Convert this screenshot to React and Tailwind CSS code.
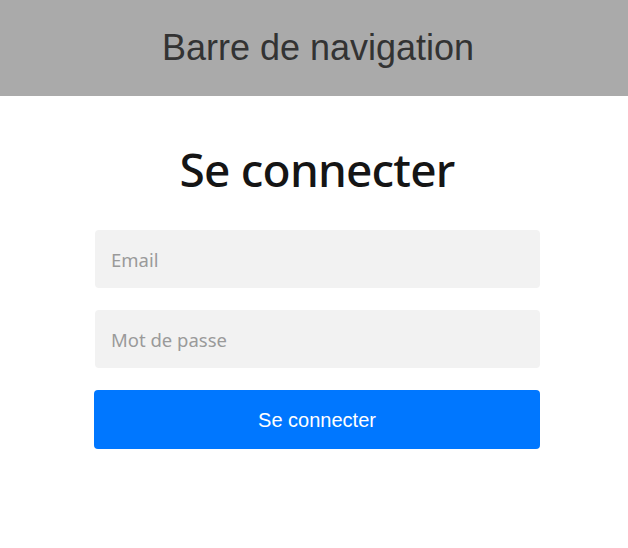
import React from "react";

const App = () => {
  return (
    <div className="min-h-[548px] bg-white">
      <nav className="h-[96px] bg-[#aaaaaa] flex items-center justify-center pl-[8px]">
        <span className="text-[36px] text-[#333333] font-['Liberation_Sans',Arial,sans-serif]">
          Barre de navigation
        </span>
      </nav>
      <div className="flex justify-center pl-[6px]">
        <form className="w-[446px] flex flex-col items-stretch" onSubmit={(e) => e.preventDefault()}>
          <h1 className="mt-[45px] text-center text-[46px] leading-[56px] font-medium text-[#151515] font-['Noto_Sans',sans-serif] tracking-[-0.8px]">
            Se connecter
          </h1>
          <input
            type="email"
            placeholder="Email"
            className="mt-[33px] h-[58px] ml-[1px] rounded-[4px] bg-[#f2f2f2] px-[16px] text-[18.5px] font-['Noto_Sans',sans-serif] placeholder:text-[#9a9a9a] outline-none"
          />
          <input
            type="password"
            placeholder="Mot de passe"
            className="mt-[22px] h-[58px] ml-[1px] rounded-[4px] bg-[#f2f2f2] px-[16px] text-[18.5px] font-['Noto_Sans',sans-serif] placeholder:text-[#9a9a9a] outline-none"
          />
          <button
            type="submit"
            className="mt-[22px] h-[59px] rounded-[4px] bg-[#0077ff] text-white text-[20px] font-['Liberation_Sans',Arial,sans-serif]"
          >
            Se connecter
          </button>
        </form>
      </div>
    </div>
  );
};

export default App;
